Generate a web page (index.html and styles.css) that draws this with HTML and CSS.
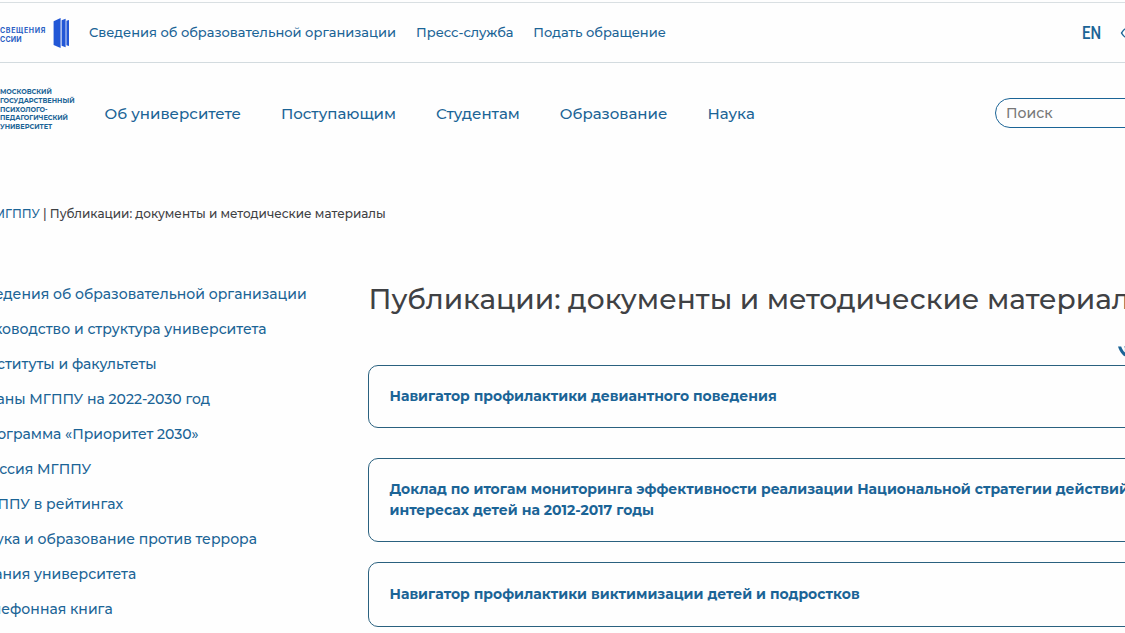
FILE: index.html
```html
<!doctype html>
<html lang="ru">

<head>
  <meta charset="UTF-8">
  <meta name="viewport" content="width=device-width, initial-scale=1">
  <title>Публикации: документы и методические материалы</title>
  <link rel="stylesheet" href="styles.css">
</head>

<body>
  <header>
    <div class="topbar">
      <a class="ministry" href="#">
        <span class="ministry-name"><span>СВЕЩЕНИЯ</span><span>ССИИ</span></span>
        <svg width="17" height="30" viewBox="0 0 17 30" fill="#2257d6">
          <path d="M.6 3.200 7.600 0v30L.6 27z" />
          <path d="M8.600 2.200 12.600.8v28.400L8.600 27.800z" />
          <path d="M13.400 2.800 16 2v26l-2.600-.8z" />
        </svg>
      </a>
      <nav class="topnav">
        <a href="#">Сведения об образовательной организации</a>
        <a href="#">Пресс-служба</a>
        <a href="#">Подать обращение</a>
      </nav>
      <a class="lang" href="#">EN</a>
      <svg class="eye" width="24" height="14" viewBox="0 0 24 14" fill="none" stroke="#1b6496" stroke-width="1.4">
        <path d="M1.500 7C3 4.500 5 1 12 1s9 3.500 10.500 6C21 9.500 19 13 12 13S3 9.500 1.500 7z" />
        <circle cx="12" cy="7" r="3" />
      </svg>
    </div>
    <div class="mainbar">
      <a class="logo" href="#">МОСКОВСКИЙ<br>ГОСУДАРСТВЕННЫЙ<br>ПСИХОЛОГО-<br>ПЕДАГОГИЧЕСКИЙ<br>УНИВЕРСИТЕТ</a>
      <nav class="mainnav">
        <a href="#">Об университете</a>
        <a href="#">Поступающим</a>
        <a href="#">Студентам</a>
        <a href="#">Образование</a>
        <a href="#">Наука</a>
      </nav>
      <input class="search" type="text" placeholder="Поиск">
    </div>
  </header>

  <div class="breadcrumbs"><a href="#">МГППУ</a> | Публикации: документы и методические материалы</div>

  <div class="content">
    <nav class="sidebar">
      <a href="#">Сведения об образовательной организации</a>
      <a href="#">Руководство и структура университета</a>
      <a href="#">Институты и факультеты</a>
      <a href="#">Планы МГППУ на 2022-2030 год</a>
      <a href="#">Программа «Приоритет 2030»</a>
      <a href="#">Миссия МГППУ</a>
      <a href="#">МГППУ в рейтингах</a>
      <a href="#">Наука и образование против террора</a>
      <a href="#">Здания университета</a>
      <a href="#">Телефонная книга</a>
    </nav>
    <main>
      <h1>Публикации: документы и методические материалы</h1>
      <div class="share">
        <svg width="21" height="12" viewBox="0 0 21 12" fill="#1b6496">
          <path d="M0 .5h3.200c1 2.600 2.300 5 3.700 6V1.800L6 .5h5v4.700c1.600-.6 3-2.700 4.200-4.700h3.600c-.8 2-2.400 4.300-3.900 5.500 1.700 1.200 3.600 3.300 4.600 5.200h-3.800c-1-1.600-2.800-3.300-4.700-3.700v3.700h-1C5.500 11.200 2 6.500 0 .5z" />
        </svg>
      </div>
      <section class="card card-first"><a href="#">Навигатор профилактики девиантного поведения</a></section>
      <section class="card"><a href="#">Доклад по итогам мониторинга эффективности реализации Национальной стратегии действий в<br>интересах детей на 2012-2017 годы</a></section>
      <section class="card card-last"><a href="#">Навигатор профилактики виктимизации детей и подростков</a></section>
    </main>
  </div>
</body>

</html>
```
FILE: styles.css
```css
* {
  box-sizing: border-box;
}

html {
  overflow: hidden;
}

body {
  margin: 0;
  width: 1300px;
  font: 500 14px/21px Montserrat, Inter, sans-serif;
  background-color: #fefefe;
  color: #3f4144;
}

a {
  color: #1b6496;
  text-decoration: none;
  white-space: nowrap;
}

.topbar {
  display: flex;
  align-items: center;
  height: 61px;
  margin-top: 2px;
  border-top: 1px solid #d9dfe2;
  border-bottom: 1px solid #d3dbdf;
}

.ministry {
  display: flex;
  align-items: center;
  width: 89px;
  color: #2a5fc4;
}

.ministry-name {
  display: flex;
  flex-direction: column;
  width: 53px;
  padding-top: 4px;
  font: 700 7px/9px Inter, sans-serif;
  letter-spacing: .68px;
}

.ministry-name span:last-child {
  letter-spacing: .2px;
}

.topnav {
  display: flex;
  flex: 0 0 993px;
  gap: 20px;
  font-size: 13px;
}

.lang {
  width: 38px;
  padding-top: 1px;
  font: 500 18.5px/20px Roboto, sans-serif;
  transform: scaleX(.81);
  transform-origin: left;
}

.mainbar {
  display: flex;
  align-items: center;
  height: 101px;
}

.logo {
  width: 104.5px;
  padding-bottom: 7px;
  font: 700 6.55px/8.7px Montserrat, Inter, sans-serif;
}

.mainnav {
  display: flex;
  flex: 0 0 890.5px;
  gap: 40px;
  font-size: 15px;
}

.search {
  width: 240px;
  height: 30px;
  margin-bottom: 2px;
  padding: 0 10px;
  border: 1px solid #1b6496;
  border-radius: 15px;
  background: none;
  font: 500 14px Montserrat, Inter, sans-serif;
}

.search::placeholder {
  color: #777;
}

.breadcrumbs {
  margin: 39px 0 0 -6.5px;
  font-size: 12px;
}

.content {
  display: flex;
  margin: 60px 0 0 -24px;
}

.sidebar {
  display: flex;
  flex-direction: column;
  width: 392px;
  gap: 14px;
}

main {
  width: 820px;
}

h1 {
  margin: -3px 0 0 .5px;
  font: 500 28px/36px Montserrat, Inter, sans-serif;
  white-space: nowrap;
}

.share {
  display: flex;
  height: 48px;
  padding: 29px 0 0 749.5px;
}

.card {
  padding: 20px 20.5px;
  border: 1px solid #2a617f;
  border-radius: 10px;
  margin-bottom: 20px;
  font-weight: 700;
}

.card-first {
  margin-bottom: 30px;
}

.card-last {
  padding: 21px 20.5px;
}
```
